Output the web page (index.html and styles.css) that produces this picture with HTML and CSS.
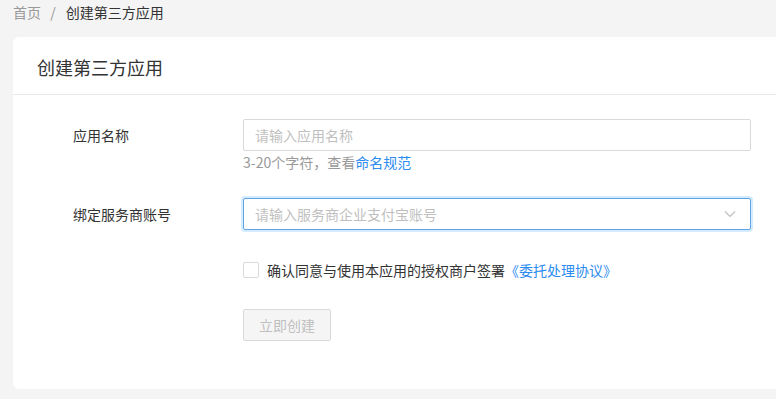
FILE: index.html
```html
<!DOCTYPE html>
<html lang="zh-CN">
<head>
  <meta charset="UTF-8">
  <meta name="viewport" content="width=device-width, initial-scale=1.0">
  <title>创建第三方应用</title>
  <link rel="stylesheet" href="styles.css">
</head>
<body>
  <div class="breadcrumb">
    <span class="crumb-home">首页</span>
    <span class="crumb-sep">/</span>
    <span class="crumb-current">创建第三方应用</span>
  </div>

  <div class="card">
    <div class="card-header">创建第三方应用</div>

    <div class="card-body">
      <div class="form-row">
        <label class="form-label" for="appName">应用名称</label>
        <div class="form-control">
          <input type="text" id="appName" class="text-input" placeholder="请输入应用名称">
          <div class="form-help">3-20个字符，查看<a href="#">命名规范</a></div>
        </div>
      </div>

      <div class="form-row">
        <label class="form-label">绑定服务商账号</label>
        <div class="form-control">
          <div class="select select-focused">
            <span class="select-placeholder">请输入服务商企业支付宝账号</span>
            <svg class="select-arrow" width="12" height="8" viewBox="0 0 12 8">
              <path d="M1 1.5 L6 6.5 L11 1.5" fill="none" stroke="#bfbfbf" stroke-width="1.2"/>
            </svg>
          </div>
        </div>
      </div>

      <div class="form-row form-row-offset agree-row">
        <label class="agree">
          <span class="checkbox"></span>
          <span>确认同意与使用本应用的授权商户签署<a href="#">《委托处理协议》</a></span>
        </label>
      </div>

      <div class="form-row form-row-offset">
        <button class="btn" disabled>立即创建</button>
      </div>
    </div>
  </div>
</body>
</html>
```

FILE: styles.css
```css
*, *::before, *::after {
  box-sizing: border-box;
}

body {
  margin: 0;
  background-color: #f4f4f4;
  color: #333;
  font-family: "Microsoft YaHei", "Noto Sans CJK SC", "Noto Sans", sans-serif;
  font-size: 14px;
  overflow: hidden;
}

a {
  color: #2d8cf0;
  text-decoration: none;
}

.breadcrumb {
  padding: 2px 13px 6px;
  line-height: 20px;
  color: #333;
}

.crumb-home {
  color: #999;
}

.crumb-sep {
  color: #999;
  margin: 0 7px 0 6px;
}

.card {
  margin: 9px -20px 0 13px;
  background-color: #fff;
  border-radius: 6px;
}

.card-header {
  padding: 17px 24px 14px;
  font-size: 18px;
  line-height: 26px;
  color: #333;
  border-bottom: 1px solid #e8e8e8;
}

.card-body {
  padding: 24px 0 48px 60px;
}

.form-row {
  display: flex;
  align-items: flex-start;
  margin-bottom: 26px;
}

.form-row-offset {
  padding-left: 170px;
  margin-bottom: 29px;
}

.agree-row {
  margin-top: 30px;
}

.form-row:last-child {
  margin-bottom: 0;
}

.form-label {
  width: 170px;
  line-height: 32px;
  color: #333;
}

.form-control {
  width: 508px;
}

.text-input {
  display: block;
  width: 100%;
  height: 32px;
  padding: 0 11px;
  border: 1px solid #d9d9d9;
  border-radius: 2px;
  font-family: inherit;
  font-size: 14px;
  color: #333;
  outline: none;
}

.text-input::placeholder {
  color: #bfbfbf;
}

.form-help {
  margin-top: 1px;
  line-height: 20px;
  color: #999;
}

.select {
  display: flex;
  align-items: center;
  justify-content: space-between;
  height: 32px;
  padding: 0 14px 0 11px;
  border: 1px solid #d9d9d9;
  border-radius: 2px;
}

.select-focused {
  border-color: #5fa3e0;
  box-shadow: 0 0 0 2px rgba(24, 144, 255, 0.18);
}

.select-placeholder {
  color: #bfbfbf;
}

.agree {
  display: flex;
  align-items: center;
  line-height: 20px;
  color: #333;
}

.checkbox {
  width: 16px;
  height: 16px;
  margin-right: 8px;
  border: 1px solid #d9d9d9;
  border-radius: 2px;
  background-color: #fff;
}

.btn {
  height: 32px;
  padding: 0 15px;
  border: 1px solid #d9d9d9;
  border-radius: 2px;
  background-color: #f5f5f5;
  color: #bfbfbf;
  font-family: inherit;
  font-size: 14px;
}
```
